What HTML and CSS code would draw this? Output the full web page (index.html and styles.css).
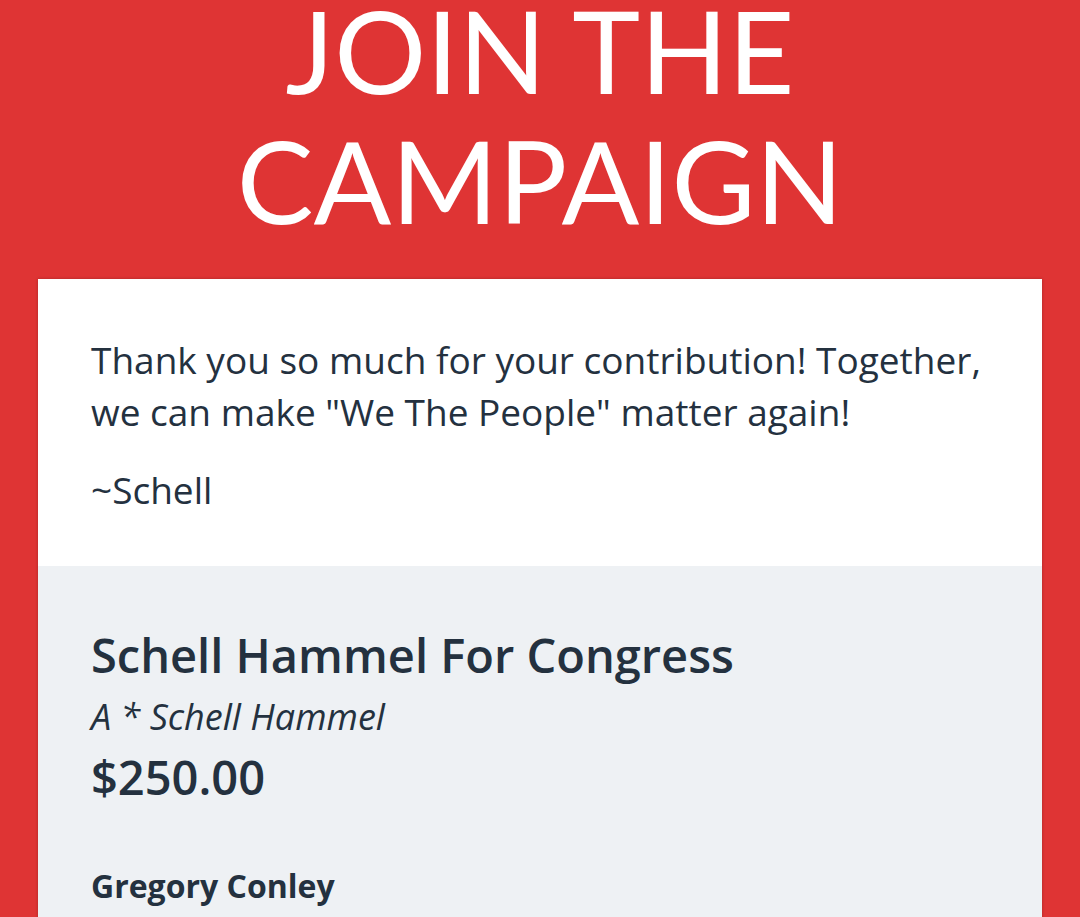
FILE: index.html
```html
<!DOCTYPE html>
<html lang="en">

<head>
    <meta charset="UTF-8">
    <meta name="viewport" content="width=device-width, initial-scale=1.0">
    <title>Join The Campaign</title>
    <link rel="stylesheet" href="styles.css">
</head>

<body>

    <header class="hero">
        <h1 class="hero-title">JOIN THE<br>CAMPAIGN</h1>
    </header>

    <main class="card">
        <section class="card-message">
            <p>Thank you so much for your contribution! Together, we can make "We The People" matter again!</p>
            <p>~Schell</p>
        </section>

        <section class="card-details">
            <h2 class="committee">Schell Hammel For Congress</h2>
            <p class="candidate">A * Schell Hammel</p>
            <p class="amount">$250.00</p>

            <div class="donor">
                <p class="donor-name">Gregory Conley</p>
                <p class="donor-line">1 Hillside Lake Blvd</p>
            </div>
        </section>
    </main>

</body>

</html>
```

FILE: styles.css
```css
body {
    margin: 0;
    background: #df3434;
    font-family: "Open Sans", Arial, sans-serif;
    color: #24313f;
}

.hero {
    padding: 0 0 35px;
    text-align: center;
}

.hero-title {
    margin: -16px 0 0;
    color: #ffffff;
    font-family: Lato, "Open Sans", sans-serif;
    font-weight: 400;
    font-size: 115px;
    line-height: 130px;
}

.card {
    margin: 0 38px;
    background: #ffffff;
    box-shadow: 0 0 3px rgba(0, 0, 0, 0.25);
}

.card-message {
    padding: 55px 53px 50px;
    font-size: 37px;
    line-height: 52px;
}

.card-message p {
    margin: 0 0 26px;
}

.card-message p:last-child {
    margin-bottom: 0;
}

.card-details {
    background: #eef1f4;
    padding: 58px 53px 0;
}

.committee {
    margin: 0;
    font-size: 47px;
    font-weight: 600;
    line-height: 62px;
}

.candidate {
    margin: 0;
    font-style: italic;
    font-size: 36px;
    line-height: 61px;
}

.amount {
    margin: 0;
    font-size: 47px;
    font-weight: 600;
    line-height: 61px;
}

.donor {
    padding-top: 56px;
}

.donor p {
    margin: 0;
    font-size: 32px;
    line-height: 44px;
}

.donor-name {
    font-weight: 700;
}
```
